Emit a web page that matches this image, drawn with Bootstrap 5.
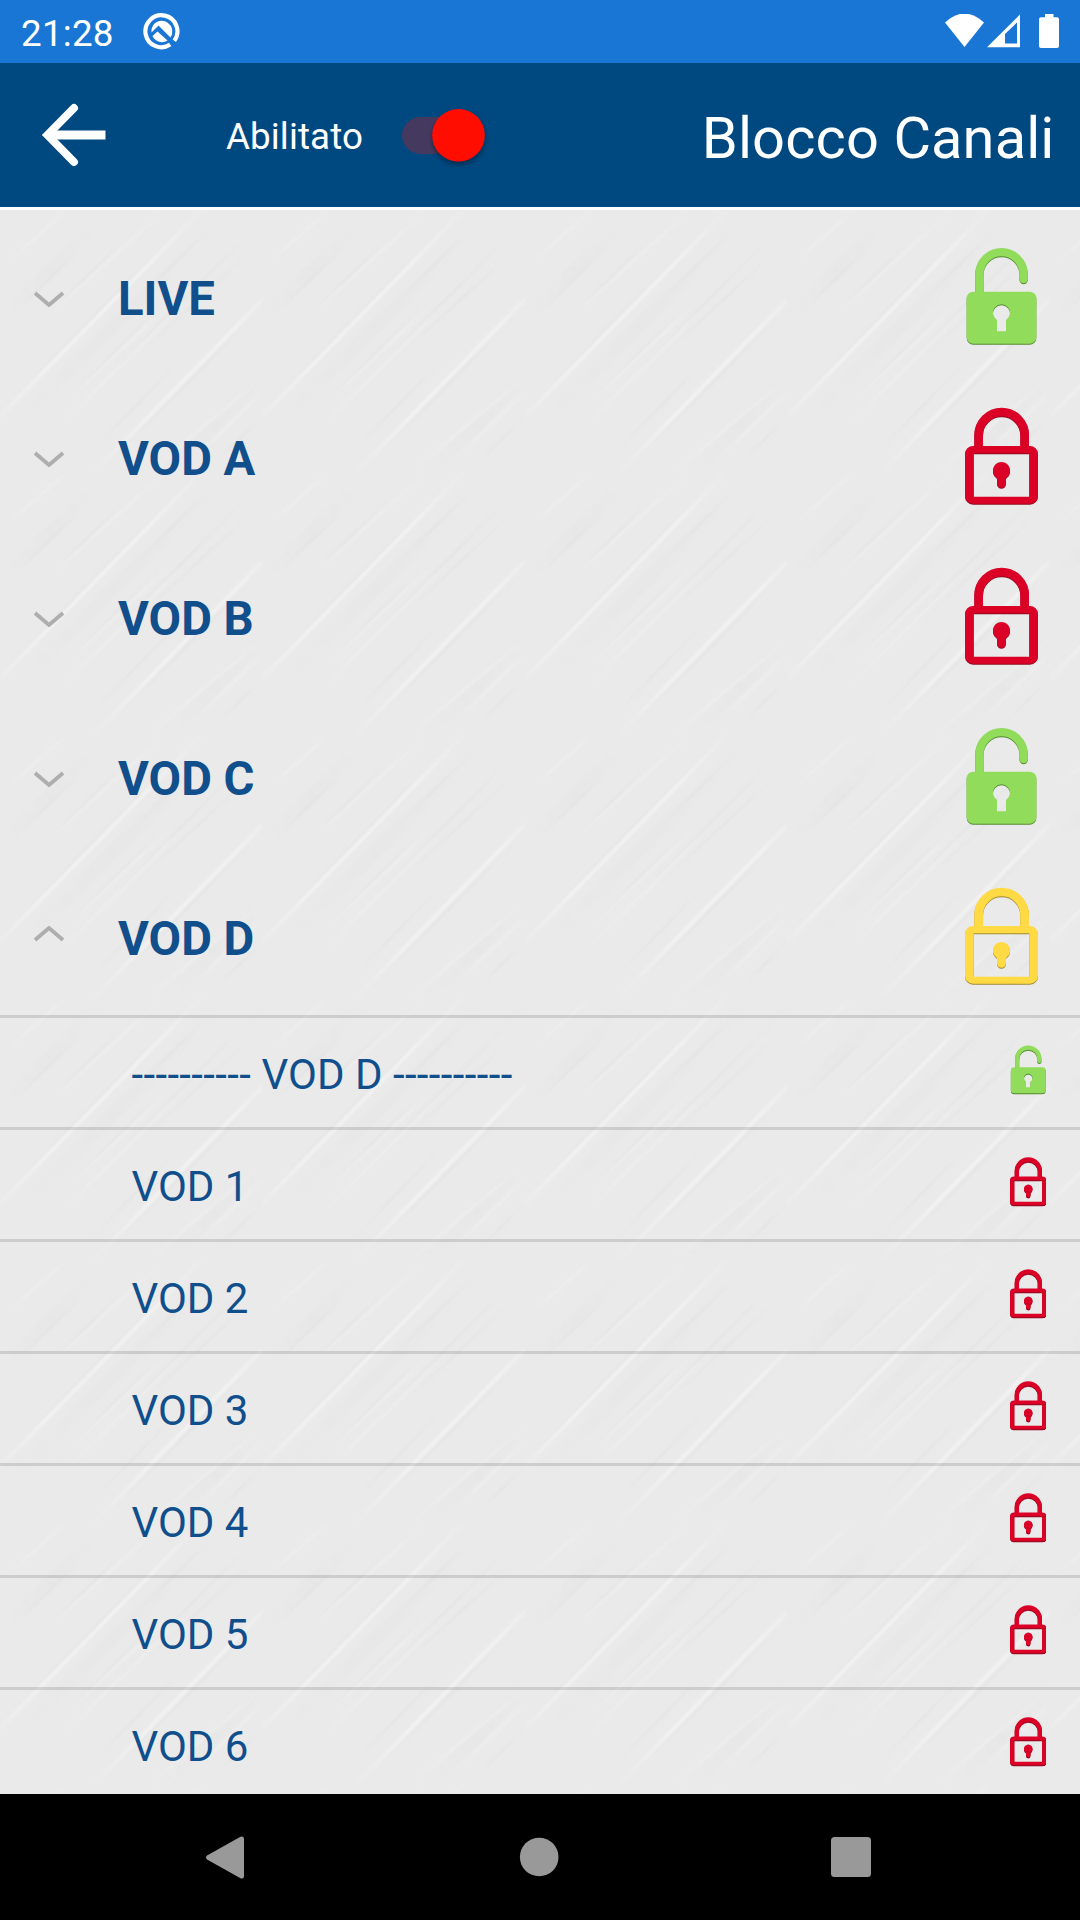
<!DOCTYPE html>
<html lang="it">
<head>
<meta charset="utf-8">
<meta name="viewport" content="width=device-width, initial-scale=1">
<title>Blocco Canali</title>
<link href="https://cdn.jsdelivr.net/npm/bootstrap@5.3.0/dist/css/bootstrap.min.css" rel="stylesheet">
<style>
  body { font-family: Roboto, "Liberation Sans", sans-serif; width: 1080px; height: 1920px; line-height: 1; }
  svg { display: block; flex: none; }
  .status-strip { height: 63px; background: #1976d4; padding: 0 20px 0 21px; font-size: 36.75px; }
  .clock { width: 122px; padding-top: 5px; letter-spacing: .25px; }
  .app-header { height: 147px; background: #004880; border-bottom: 3px solid #fff; padding: 0 25.5px 0 38px; }
  .switch-label { font-size: 36.75px; margin-left: 116px; padding-top: 5px; width: 176px; letter-spacing: .1px; }
  .app-title { font-size: 57.75px; font-weight: 400; padding-top: 7px; line-height: 1; letter-spacing: .12px; }
  .channels {
    height: 1584px; background-color: #eaeaea; background-size: 262.5px 262.5px; color: #104e8c;
    background-image: url("data:image/svg+xml,%3Csvg xmlns='http://www.w3.org/2000/svg' viewBox='0 0 789 789'%3E%3Cdefs%3E%3ClinearGradient id='l' x1='0' y1='1' x2='1' y2='0'%3E%3Cstop offset='0' stop-color='%23f2f2f2' stop-opacity='0'/%3E%3Cstop offset='.3' stop-color='%23f2f2f2'/%3E%3Cstop offset='.75' stop-color='%23f2f2f2'/%3E%3Cstop offset='1' stop-color='%23f2f2f2' stop-opacity='0'/%3E%3C/linearGradient%3E%3ClinearGradient id='d' x1='0' y1='1' x2='1' y2='0'%3E%3Cstop offset='0' stop-color='%23dedede' stop-opacity='0'/%3E%3Cstop offset='.5' stop-color='%23dedede'/%3E%3Cstop offset='1' stop-color='%23dedede' stop-opacity='0'/%3E%3C/linearGradient%3E%3Cfilter id='b'%3E%3CfeGaussianBlur stdDeviation='2.5'/%3E%3C/filter%3E%3C/defs%3E%3Cg fill='none' filter='url(%23b)'%3E%3Cg stroke='url(%23d)' stroke-width='40' opacity='.2'%3E%3Cpath d='M30 660L640 50'/%3E%3Cpath d='M500 789L789 500'/%3E%3Cpath d='M0 330L300 30'/%3E%3C/g%3E%3Cg stroke='url(%23d)' stroke-width='7' opacity='.5'%3E%3Cpath d='M0 606L560 35'/%3E%3Cpath d='M250 750L560 430'/%3E%3Cpath d='M340 745L789 290'/%3E%3Cpath d='M330 490L789 30'/%3E%3Cpath d='M400 450L789 90'/%3E%3Cpath d='M170 600L500 270'/%3E%3Cpath d='M650 755L789 620'/%3E%3Cpath d='M90 370L400 60'/%3E%3Cpath d='M400 280L640 45'/%3E%3Cpath d='M50 300L250 110'/%3E%3C/g%3E%3Cg stroke='url(%23l)' stroke-width='6' opacity='.65'%3E%3Cpath d='M30 150L195 5'/%3E%3Cpath d='M100 355L490 5'/%3E%3Cpath d='M180 590L500 290'/%3E%3Cpath d='M190 640L560 270'/%3E%3Cpath d='M600 730L789 545'/%3E%3Cpath d='M450 785L789 500'/%3E%3C/g%3E%3Cpath stroke='url(%23l)' stroke-width='11' d='M-60 680L620 -15'/%3E%3Cpath stroke='url(%23l)' stroke-width='11' d='M270 800L850 205'/%3E%3C/g%3E%3C/svg%3E");
  }
  .group-row { height: 160px; padding: 9px 42px 0 34px; font-size: 47.25px; font-weight: 700; }
  .group-row .group-name { margin-left: 54px; padding-top: 11px; }
  .group-row .chev { margin-top: 9px; }
  .group-row.is-open .chev { margin-top: -1px; }
  .group-row .lock { width: 73px; height: 98px; margin-top: 3px; }
  .sub-list { margin-top: 5px; }
  .sub-row { height: 112px; border-top: 3px solid rgba(0,0,0,.12); padding: 0 34px 0 131.5px; font-size: 42px; }
  .sub-row .sub-name { padding-top: 5px; }
  .sub-row .dashes { letter-spacing: .36px; }
  .sub-row .lock { width: 36.5px; height: 49px; margin-bottom: 6px; }
  .lock-open { color: #91dc5b; filter: drop-shadow(0 1px 0 #558a30); }
  .lock-shut { color: #db0026; filter: drop-shadow(0 1px 0 #8f0a20); }
  .lock-part { color: #ffda45; filter: drop-shadow(0 1px 0 #a08a30); }
  .sys-nav { height: 126px; padding: 0 209px 0 206px; }
</style>
</head>
<body class="overflow-hidden m-0 d-flex flex-column">
<svg width="0" height="0" class="position-absolute" aria-hidden="true">
  <symbol id="unlocked" viewBox="75 51 219 294">
    <path d="M118 190V133a66.500 66.500 0 0 1 133 0V148" fill="none" stroke="currentColor" stroke-width="25"/>
    <circle cx="251" cy="147" r="12.500" fill="currentColor"/>
    <path fill="currentColor" fill-rule="evenodd" d="M100 185H269a20 20 0 0 1 20 20V321a20 20 0 0 1-20 20H100a20 20 0 0 1-20-20V205a20 20 0 0 1 20-20ZM171 304H198V270A25.500 25.500 0 1 0 171 270Z"/>
  </symbol>
  <symbol id="locked" viewBox="75 51 219 294">
    <path d="M116 175V135a69 69 0 0 1 138 0V175" fill="none" stroke="currentColor" stroke-width="26"/>
    <path fill="currentColor" fill-rule="evenodd" d="M99 168H270a24 24 0 0 1 24 24V317a24 24 0 0 1-24 24H99a24 24 0 0 1-24-24V192a24 24 0 0 1 24-24ZM101 190V320H268V190Z"/>
    <path fill="currentColor" d="M171 264V280a13.500 13.500 0 0 0 27 0V264A26 26 0 1 0 171 264Z"/>
  </symbol>
  <symbol id="chevron-down" viewBox="0 0 30 16"><path d="M1 2L15 14L29 2" fill="none" stroke="#aeaeae" stroke-width="3.800"/></symbol>
  <symbol id="chevron-up" viewBox="0 0 30 16"><path d="M1 14L15 2L29 14" fill="none" stroke="#aeaeae" stroke-width="3.800"/></symbol>
</svg>

<div class="status-strip d-flex align-items-center text-white">
  <span class="clock">21:28</span>
  <svg width="37" height="37" viewBox="0 0 37 37">
    <path d="M27.200 31.600A16 16 0 1 1 31.300 27.700" fill="none" stroke="#fff" stroke-width="4.200"/>
    <path d="M10 12.500A10.400 10.400 0 0 1 27.500 24.500L15.500 12.500L8.500 19.500A10.400 10.400 0 0 1 10 12.500Z" fill="#fff"/>
    <path d="M9.500 23L14.500 18.500L24.500 27.500A10.400 10.400 0 0 1 9.500 23Z" fill="#fff"/>
  </svg>
  <svg class="ms-auto" width="115" height="36" viewBox="945 14 115 36">
    <path fill="#fff" d="M945 22.500Q964.500 4.500 984 22.500L964.500 47Z"/>
    <path fill="#fff" fill-rule="evenodd" d="M987 47.300L1020 14.500V47.300ZM1005 34V43.500H1017V22.500Z"/>
    <path fill="#fff" d="M1045 14H1053.500V17.300H1057a2 2 0 0 1 2 2V46a2 2 0 0 1-2 2H1041a2 2 0 0 1-2-2V19.300a2 2 0 0 1 2-2H1045Z"/>
  </svg>
</div>

<header class="app-header d-flex align-items-center text-white">
  <svg width="72" height="68" viewBox="38 100.500 72 68">
    <path d="M74 107.500L47.500 134.500L74 161.500" fill="none" stroke="#fff" stroke-width="8" stroke-linecap="round"/>
    <path d="M42 134.500L57 126V143ZM50 130H105.500V139H50Z" fill="#fff"/>
  </svg>
  <label class="switch-label">Abilitato</label>
  <svg width="92" height="66" viewBox="402 101 92 66" role="img" aria-label="Abilitato">
    <defs><filter id="thumb-shadow" x="-20%" y="-20%" width="140%" height="150%"><feDropShadow dx="0" dy="3" stdDeviation="2.500" flood-opacity=".4"/></filter></defs>
    <rect x="402" y="116" width="78" height="37" rx="18.500" fill="#45395f"/>
    <circle cx="458.500" cy="134.200" r="26.300" fill="#ff0a00" filter="url(#thumb-shadow)"/>
  </svg>
  <h1 class="app-title ms-auto mb-0">Blocco Canali</h1>
</header>

<main class="channels overflow-hidden">
  <div class="group-row d-flex align-items-center"><svg class="chev" width="30" height="16"><use href="#chevron-down"/></svg><span class="group-name">LIVE</span><svg class="lock lock-open ms-auto"><use href="#unlocked"/></svg></div>
  <div class="group-row d-flex align-items-center"><svg class="chev" width="30" height="16"><use href="#chevron-down"/></svg><span class="group-name">VOD A</span><svg class="lock lock-shut ms-auto"><use href="#locked"/></svg></div>
  <div class="group-row d-flex align-items-center"><svg class="chev" width="30" height="16"><use href="#chevron-down"/></svg><span class="group-name">VOD B</span><svg class="lock lock-shut ms-auto"><use href="#locked"/></svg></div>
  <div class="group-row d-flex align-items-center"><svg class="chev" width="30" height="16"><use href="#chevron-down"/></svg><span class="group-name">VOD C</span><svg class="lock lock-open ms-auto"><use href="#unlocked"/></svg></div>
  <div class="group-row is-open d-flex align-items-center"><svg class="chev" width="30" height="16"><use href="#chevron-up"/></svg><span class="group-name">VOD D</span><svg class="lock lock-part ms-auto"><use href="#locked"/></svg></div>
  <div class="sub-list">
    <div class="sub-row d-flex align-items-center"><span class="sub-name"><span class="dashes">----------</span> VOD D <span class="dashes">----------</span></span><svg class="lock lock-open ms-auto"><use href="#unlocked"/></svg></div>
    <div class="sub-row d-flex align-items-center"><span class="sub-name">VOD 1</span><svg class="lock lock-shut ms-auto"><use href="#locked"/></svg></div>
    <div class="sub-row d-flex align-items-center"><span class="sub-name">VOD 2</span><svg class="lock lock-shut ms-auto"><use href="#locked"/></svg></div>
    <div class="sub-row d-flex align-items-center"><span class="sub-name">VOD 3</span><svg class="lock lock-shut ms-auto"><use href="#locked"/></svg></div>
    <div class="sub-row d-flex align-items-center"><span class="sub-name">VOD 4</span><svg class="lock lock-shut ms-auto"><use href="#locked"/></svg></div>
    <div class="sub-row d-flex align-items-center"><span class="sub-name">VOD 5</span><svg class="lock lock-shut ms-auto"><use href="#locked"/></svg></div>
    <div class="sub-row d-flex align-items-center"><span class="sub-name">VOD 6</span><svg class="lock lock-shut ms-auto"><use href="#locked"/></svg></div>
  </div>
</main>

<nav class="sys-nav bg-black d-flex align-items-center justify-content-between">
  <svg width="38" height="43" viewBox="0 0 38 43"><path fill="#999" d="M1 19.500L34.500 .800Q38 -.500 38 3V40Q38 43.500 34.500 42.200L1 23.500Q-1 21.500 1 19.500Z"/></svg>
  <svg width="42" height="40" viewBox="0 0 42 40"><circle cx="22.200" cy="20" r="19.300" fill="#999"/></svg>
  <svg width="40" height="40" viewBox="0 0 40 40"><rect width="40" height="40" rx="3.500" fill="#999"/></svg>
</nav>
<script src="https://cdn.jsdelivr.net/npm/bootstrap@5.3.0/dist/js/bootstrap.bundle.min.js"></script>
</body>
</html>
